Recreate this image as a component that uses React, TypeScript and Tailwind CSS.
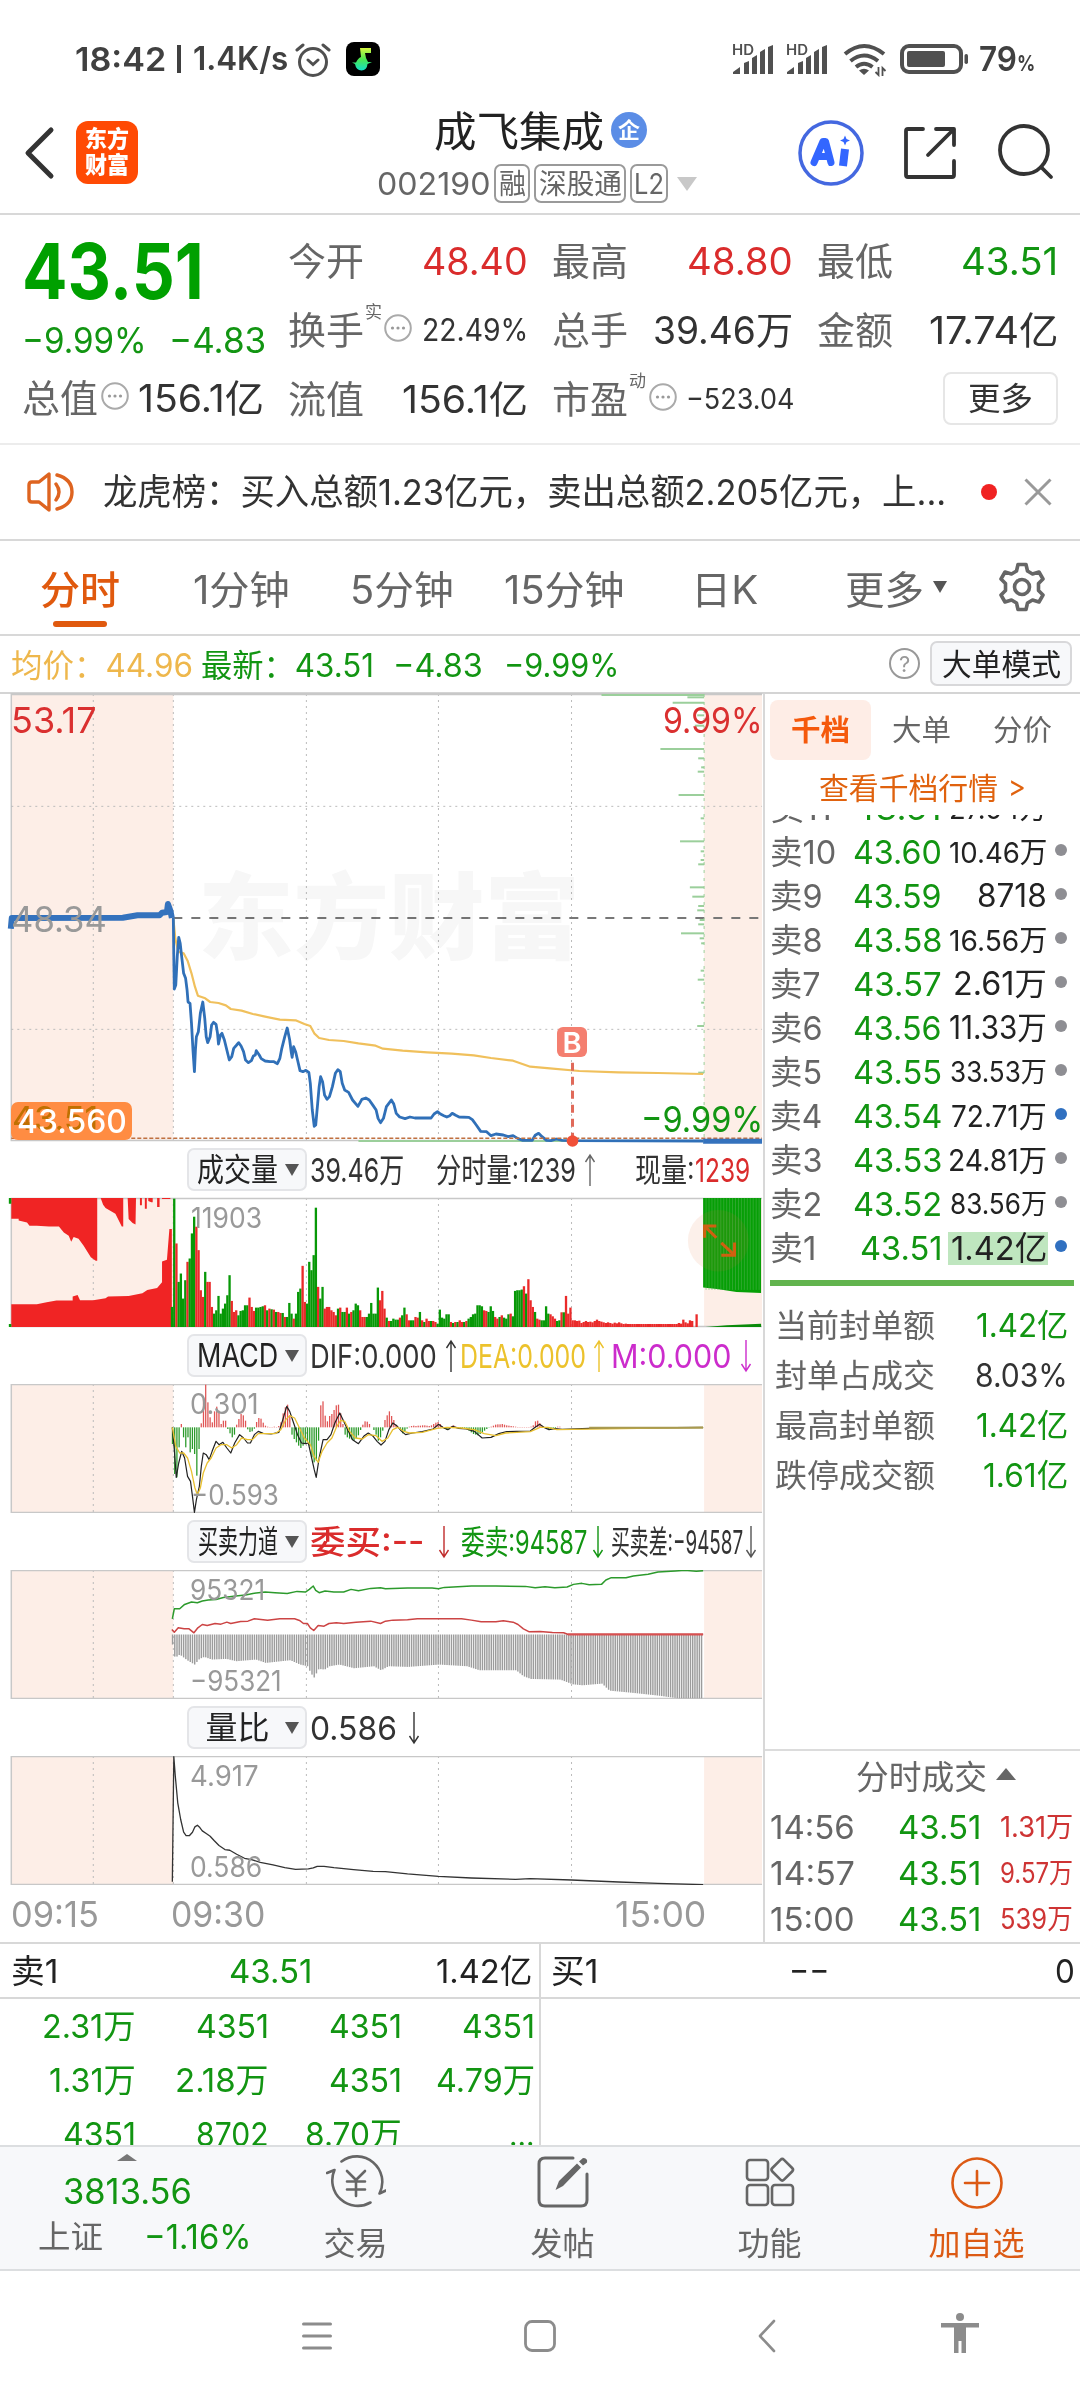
import { useLayoutEffect, useRef, useState } from "react";
import type { ReactNode } from "react";
import clsx from "clsx";

// Text that is squeezed or widened to the width of its box.
function Fit({ className, children }: { className: string; children: ReactNode }) {
  const box = useRef<HTMLSpanElement>(null);
  const text = useRef<HTMLSpanElement>(null);
  const [scale, setScale] = useState(1);

  useLayoutEffect(() => {
    if (!box.current || !text.current || !text.current.offsetWidth) return;
    setScale(box.current.clientWidth / text.current.offsetWidth);
  }, [children]);

  return (
    <span ref={box} className={clsx("block shrink-0 whitespace-pre", className)}>
      <span ref={text} className="inline-block origin-left" style={{ transform: `scaleX(${scale})` }}>
        {children}
      </span>
    </span>
  );
}

function Signal() {
  return (
    <svg viewBox="0 0 42 32" className="h-8 w-[42px] overflow-visible" fill="#505050">
      <text x="0" y="12" fontSize="14" fontWeight="600" textLength="22" lengthAdjust="spacingAndGlyphs">
        HD
      </text>
      <path d="M1 31V29L8 24V31ZM12 31V20L17 18V31ZM20 31V15L25 12V31ZM28 31V9L33 6V31ZM36 31V4L41 2V31Z" />
    </svg>
  );
}

function StatusBar() {
  return (
    <div className="flex h-[92px] shrink-0 items-center pt-[26px] text-[#404040]">
      <Fit className="ml-[75px] w-[91px] text-[33px] font-semibold">18:42</Fit>
      <span className="ml-[11px] h-7 w-[4px] bg-[#404040]" />
      <Fit className="ml-3 w-[95px] text-[32px] font-semibold">1.4K/s</Fit>
      <svg viewBox="0 0 36 36" className="ml-[7px] mt-[2px] h-9 w-9" fill="none" stroke="#505050" strokeWidth="3" strokeLinecap="round">
        <circle cx="18" cy="20" r="13.5" />
        <path d="M2 8L8 3M34 8L28 3M13 18L18 22.500L23 18" />
      </svg>
      <svg viewBox="0 0 34 34" className="ml-[15px] h-[34px] w-[34px]">
        <defs>
          <linearGradient id="note" x1="0" y1="0" x2="0" y2="1">
            <stop offset="0" stopColor="#d8f640" />
            <stop offset=".5" stopColor="#4be850" />
            <stop offset="1" stopColor="#12e0c8" />
          </linearGradient>
        </defs>
        <rect width="34" height="34" rx="8" />
        <path fill="url(#note)" d="M14 6H25V11H19L20 16L22 20H26L21.500 22Q21 28 15.500 28.500Q10 28 9 22L6 20.500H10Q12 16 15 15Z" />
      </svg>
      <div className="ml-[352px] flex items-center">
        <Signal />
        <span className="w-3" />
        <Signal />
        <svg viewBox="0 0 44 34" className="ml-[15px] mt-[2px] h-[34px] w-11" fill="none" stroke="#505050" strokeWidth="4">
          <path d="M2 11Q21 -5 41 11M7.500 18Q21 7 35 18M13 24Q21 17.500 29.500 24" />
          <path d="M16 27.500Q21 24 26 27.500L21 32Z" fill="#505050" stroke="none" />
          <path d="M35.500 24V32L32.500 29M39.500 33V25L42.500 28" strokeWidth="1.800" />
        </svg>
        <svg viewBox="0 0 70 32" className="ml-[13px] h-8 w-[70px]" fill="#505050">
          <rect x="2" y="3" width="59" height="26" rx="7" fill="none" stroke="#505050" strokeWidth="4" />
          <rect x="7" y="8" width="38" height="16" rx="2" />
          <rect x="64.500" y="11" width="3.500" height="10" rx="1.700" />
        </svg>
        <Fit className="ml-[9px] w-[38px] text-[34px] font-semibold">79</Fit>
        <Fit className="mt-2 w-[18px] text-[22px] font-bold">%</Fit>
      </div>
    </div>
  );
}

function Tag({ className, children }: { className: string; children: ReactNode }) {
  return (
    <span className={clsx("flex h-[39px] items-center justify-center rounded-[7px] border-2 border-[#9a9a9a]", className)}>
      {children}
    </span>
  );
}

function Header() {
  return (
    <header className="flex h-[123px] shrink-0 items-start border-b-2 border-[#d8d8d8]">
      <svg viewBox="0 0 32 56" className="ml-[23px] mt-[33px] h-14 w-8" fill="none" stroke="#333" strokeWidth="5" strokeLinecap="round" strokeLinejoin="round">
        <path d="M28 5L5 28L28 51" />
      </svg>
      <div className="ml-[21px] mt-[29px] flex h-[63px] w-[62px] flex-col items-center justify-center gap-[3px] rounded-[12px] bg-[#ff4a04] font-black text-white">
        <Fit className="w-[44px] text-[23px]">东方</Fit>
        <Fit className="w-[44px] text-[23px]">财富</Fit>
      </div>
      <div className="ml-[238px] flex w-[324px] flex-col">
        <div className="mt-[19px] flex h-[42px] items-center pl-[58px]">
          <Fit className="w-[170px] text-[42px] text-[#222]">成飞集成</Fit>
          <span className="-mt-1 ml-[7px] flex h-[36px] w-[36px] items-center justify-center rounded-full bg-[#5b8de6] text-[22px] font-bold text-white">
            企
          </span>
        </div>
        <div className="mt-[11px] flex h-[39px] items-center text-[28px] text-[#666]">
          <Fit className="ml-[1px] w-[113px] text-[31px]">002190</Fit>
          <Tag className="ml-[4px] w-[36px]">
            <Fit className="w-[27px]">融</Fit>
          </Tag>
          <Tag className="ml-[4px] w-[92px]">
            <Fit className="w-[83px]">深股通</Fit>
          </Tag>
          <Tag className="ml-[4px] w-[38px]">
            <Fit className="w-[30px]">L2</Fit>
          </Tag>
          <svg viewBox="0 0 20 14" className="ml-[9px] h-[14px] w-5" fill="#c8c8c8">
            <path d="M0 0H20L10 14Z" />
          </svg>
        </div>
      </div>
      <svg viewBox="0 0 66 66" className="ml-[98px] mt-[28px] h-[66px] w-[66px]">
        <circle cx="33" cy="33" r="31" fill="none" stroke="#4468e0" strokeWidth="3.500" />
        <g fill="none" stroke="#3366ff" strokeWidth="7" strokeLinejoin="round" strokeLinecap="round">
          <path d="M16 42.500L25 21.500H27.500L33 42.500M22 36.500H31" />
          <path d="M47 29L45 46" strokeLinecap="butt" strokeWidth="8" />
        </g>
        <path d="M47 15.500L48.500 19L52 20.500L48.500 22L47 25.500L45.500 22L42 20.500L45.500 19Z" fill="#3366ff" />
      </svg>
      <svg viewBox="0 0 56 56" className="ml-[38px] mt-[33px] h-14 w-14" fill="none" stroke="#333" strokeWidth="3.800" strokeLinecap="round" strokeLinejoin="round">
        <path d="M21 4H6Q4 4 4 6V50Q4 52 6 52H50Q52 52 52 50V36M34 4H52V20M51 5L26 30" />
      </svg>
      <svg viewBox="0 0 58 58" className="ml-[39px] mt-[31px] h-[58px] w-[58px]" fill="none" stroke="#333" strokeWidth="3.800" strokeLinecap="round">
        <circle cx="27" cy="27" r="24" />
        <path d="M44 44L54 54" />
      </svg>
    </header>
  );
}

function MoreDots({ className }: { className?: string }) {
  return (
    <svg viewBox="0 0 28 28" className={clsx("h-7 w-7 shrink-0", className)} fill="#999">
      <circle cx="14" cy="14" r="12.800" fill="none" stroke="#aaa" strokeWidth="2" />
      <circle cx="8.500" cy="14" r="1.600" />
      <circle cx="14" cy="14" r="1.600" />
      <circle cx="19.500" cy="14" r="1.600" />
    </svg>
  );
}

function QuoteSummary() {
  return (
    <section className="flex h-[230px] shrink-0 border-b-2 border-[#ececec] pt-[11px] text-[38px] text-[#333]">
      <div className="w-[288px] pl-[22px]">
        <Fit className="mt-[7px] w-[182px] text-[77px] font-bold text-[#00a000]">43.51</Fit>
        <div className="mt-[12px] flex h-[36px] items-center gap-[22px] text-[35px] text-[#129512]">
          <Fit className="w-[125px]">−9.99%</Fit>
          <Fit className="w-[97px]">−4.83</Fit>
        </div>
        <div className="mt-[5px] flex h-[69px] items-center">
          <Fit className="w-[76px] text-[#666]">总值</Fit>
          <MoreDots className="-mt-1 ml-[3px]" />
          <Fit className="ml-[9px] w-[126px]">156.1亿</Fit>
        </div>
      </div>
      <div className="w-[264px]">
        <div className="flex h-[69px] items-center justify-between pr-[24px]">
          <Fit className="w-[76px] text-[#666]">今开</Fit>
          <Fit className="w-[106px] text-[#da2c2c]">48.40</Fit>
        </div>
        <div className="flex h-[69px] items-center">
          <Fit className="w-[76px] text-[#666]">换手</Fit>
          <Fit className="-mt-[34px] ml-[1px] w-[17px] text-[17px] text-[#666]">实</Fit>
          <MoreDots className="-mt-1 ml-[2px]" />
          <Fit className="ml-[10px] w-[106px] text-[31px]">22.49%</Fit>
        </div>
        <div className="flex h-[69px] items-center justify-between pr-[24px]">
          <Fit className="w-[76px] text-[#666]">流值</Fit>
          <Fit className="w-[126px]">156.1亿</Fit>
        </div>
      </div>
      <div className="w-[265px]">
        <div className="flex h-[69px] items-center justify-between pr-[24px]">
          <Fit className="w-[76px] text-[#666]">最高</Fit>
          <Fit className="w-[106px] text-[#da2c2c]">48.80</Fit>
        </div>
        <div className="flex h-[69px] items-center justify-between pr-[24px]">
          <Fit className="w-[76px] text-[#666]">总手</Fit>
          <Fit className="w-[140px]">39.46万</Fit>
        </div>
        <div className="flex h-[69px] items-center">
          <Fit className="w-[76px] text-[#666]">市盈</Fit>
          <Fit className="-mt-[34px] ml-[1px] w-[17px] text-[17px] text-[#666]">动</Fit>
          <MoreDots className="-mt-1 ml-[3px]" />
          <Fit className="ml-[9px] w-[108px] text-[28px]">−523.04</Fit>
        </div>
      </div>
      <div className="w-[241px]">
        <div className="flex h-[69px] items-center justify-between">
          <Fit className="w-[76px] text-[#666]">最低</Fit>
          <Fit className="w-[97px] text-[#129512]">43.51</Fit>
        </div>
        <div className="flex h-[69px] items-center justify-between">
          <Fit className="w-[76px] text-[#666]">金额</Fit>
          <Fit className="w-[129px]">17.74亿</Fit>
        </div>
        <div className="ml-[126px] mt-[8px] flex h-[53px] w-[115px] items-center justify-center rounded-[8px] border-2 border-[#e6e6e6]">
          <Fit className="w-[65px] text-[32px]">更多</Fit>
        </div>
      </div>
    </section>
  );
}

function Notice() {
  return (
    <section className="flex h-[96px] shrink-0 items-center border-b-2 border-[#d8d8d8]">
      <svg viewBox="0 0 48 42" className="ml-[26px] h-[42px] w-12" fill="none" stroke="#de6420" strokeWidth="3.400" strokeLinejoin="round" strokeLinecap="round">
        <path d="M23 3V39L13 31H6Q3 31 3 28V14Q3 11 6 11H13Z" />
        <path d="M30 13Q36 21 30 29M31 4Q46 8 46 21Q46 34 31 38" />
      </svg>
      <Fit className="ml-[29px] w-[843px] text-[36px] text-[#333]">龙虎榜：买入总额1.23亿元，卖出总额2.205亿元，上...</Fit>
      <span className="ml-[35px] h-4 w-4 rounded-full bg-[#f02222]" />
      <svg viewBox="0 0 28 28" className="ml-[27px] h-7 w-7" stroke="#999" strokeWidth="3">
        <path d="M1.500 1.500L26.500 26.500M26.500 1.500L1.500 26.500" />
      </svg>
    </section>
  );
}

function PeriodTabs() {
  return (
    <nav className="flex h-[95px] shrink-0 items-center border-b-2 border-[#d8d8d8] pt-[3px] text-[39px] text-[#666]">
      <div className="relative ml-[40px] text-[#e0590e]">
        <Fit className="w-[80px] font-medium">分时</Fit>
        <span className="absolute -bottom-[18px] left-[13px] h-[6px] w-[54px] rounded-[3px] bg-[#e0590e]" />
      </div>
      <Fit className="ml-[73px] w-[97px]">1分钟</Fit>
      <Fit className="ml-[60px] w-[104px]">5分钟</Fit>
      <Fit className="ml-[50px] w-[121px]">15分钟</Fit>
      <Fit className="ml-[66px] w-[67px]">日K</Fit>
      <Fit className="ml-[87px] w-[79px]">更多</Fit>
      <svg viewBox="0 0 14 12" className="-mt-1 ml-[9px] h-3 w-[14px]" fill="#555">
        <path d="M0 0H14L7 12Z" />
      </svg>
      <svg viewBox="0 0 48 50" className="-mt-[4px] ml-[51px] h-[50px] w-12" fill="none" stroke="#666" strokeWidth="3.600" strokeLinejoin="round">
        <path d="M20 2.500H28L29.500 9L34.500 12L41 10L45 17L40.500 21.500V28.500L45 33L41 40L34.500 38L29.500 41L28 47.500H20L18.500 41L13.500 38L7 40L3 33L7.500 28.500V21.500L3 17L7 10L13.500 12L18.500 9Z" />
        <circle cx="24" cy="25" r="7.500" />
      </svg>
    </nav>
  );
}

function PriceLine() {
  return (
    <div className="flex h-[58px] shrink-0 items-center border-b-2 border-[#d4d4d4] pt-[3px] text-[32px] text-[#129512]">
      <Fit className="ml-[11px] w-[182px] text-[#eeb74c]">均价：44.96</Fit>
      <Fit className="ml-[8px] w-[173px]">最新：43.51</Fit>
      <Fit className="ml-[19px] w-[90px]">−4.83</Fit>
      <Fit className="ml-[21px] w-[115px]">−9.99%</Fit>
      <span className="-mt-1 ml-[270px] flex h-[31px] w-[31px] items-center justify-center rounded-full border-2 border-[#999] text-[22px] text-[#999]">
        ?
      </span>
      <span className="-mt-1 ml-[10px] flex h-[45px] w-[142px] items-center justify-center rounded-[7px] border-2 border-[#d8d8da] bg-[#f7f8fa] text-[30px] text-[#222]">
        <Fit className="w-[119px]">大单模式</Fit>
      </span>
    </div>
  );
}

// Session shading and time grid shared by all the charts. The charts use one
// horizontal scale of 1556 units; each has its own vertical range.
function Frame({ top, height }: { top: number; height: number }) {
  return (
    <g>
      <rect x="23" y={top} width="330" height={height} fill="#fdeee7" />
      <rect x="1434" y={top} width="118" height={height} fill="#fdeee7" />
      <g stroke="#bbb" strokeDasharray="2 4">
        {[190, 353, 624, 893, 1164].map((x) => (
          <line key={x} x1={x} x2={x} y1={top} y2={top + height} vectorEffect="non-scaling-stroke" />
        ))}
      </g>
      <path d={`M1552 ${top + 1.5}H23V${top + height - 1.5}H1552`} fill="none" stroke="#c8c8c8" strokeWidth="1.500" vectorEffect="non-scaling-stroke" />
    </g>
  );
}

function Line({ points, color, width = 1.5 }: { points: string; color: string; width?: number }) {
  return <polyline points={points} fill="none" stroke={color} strokeWidth={width} strokeLinejoin="round" vectorEffect="non-scaling-stroke" />;
}

const bookDepth = [
  [15, 1225], [22, 1400], [38, 1370], [60, 1424], [76, 1420], [107, 1415], [177, 1345], [205, 1422], [232, 1428], [245, 1421],
  [315, 1382], [385, 1427], [454, 1385], [484, 1427], [510, 1427], [523, 1422], [592, 1405], [620, 1410], [648, 1422], [661, 1420],
  [690, 1425], [703, 1422], [730, 1387], [745, 1425], [760, 1428], [842, 1427], [869, 1421], [938, 1428], [1008, 1420], [1148, 1422],
];

const pricePoints =
  "353,684 354,800 355,897 358,885 361,800 364,742 367,760 370,800 374,850 378,865 381,900 383,936 387,940 390,1000 393,1080 396,1145 398,1080 400,1040 404,1025 408,970 413,936 417,985 420,1040 423,1058 428,1040 431,1005 435,997 440,1003 443,1030 445,1062 449,1035 452,1030 457,1050 462,1080 467,1110 472,1100 476,1075 482,1065 486,1058 491,1068 496,1085 500,1110 506,1118 512,1112 516,1098 520,1095 522,1082 528,1095 532,1106 540,1113 550,1115 558,1115 565,1121 570,1105 574,1075 580,1040 585,1014 590,1050 593,1085 595,1102 598,1070 602,1085 606,1110 611,1142 617,1145 623,1141 629,1147 632,1180 636,1260 640,1309 643,1305 647,1240 650,1190 653,1160 657,1175 661,1215 666,1228 671,1220 677,1190 683,1150 688,1139 693,1145 697,1180 702,1200 710,1207 718,1230 729,1249 737,1228 745,1224 752,1230 760,1247 766,1260 770,1285 775,1298 781,1285 787,1250 792,1240 797,1230 802,1242 807,1270 814,1281 825,1286 835,1281 845,1284 860,1284 878,1284 884,1272 891,1265 897,1272 904,1277 910,1281 916,1277 921,1270 928,1276 935,1281 955,1282 962,1289 970,1305 979,1324 991,1325 1000,1337 1010,1332 1025,1335 1035,1340 1045,1337 1055,1346 1065,1351 1084,1351 1090,1336 1097,1330 1104,1340 1113,1351 1122,1352 1133,1347 1145,1351 1165,1352 1432,1353";

const averagePoints =
  "353,684 357,745 363,785 374,790 382,812 390,850 397,890 403,917 418,925 428,936 445,939 460,946 470,957 492,962 515,972 540,980 570,989 602,991 620,1002 632,1008 640,1030 650,1044 670,1050 700,1053 730,1060 765,1067 780,1076 820,1082 870,1087 920,1091 965,1096 1000,1104 1045,1112 1080,1130 1120,1135 1180,1143 1260,1147 1340,1149 1432,1152";

function MainChart() {
  return (
    <div className="relative h-[447px]">
      <span className="absolute left-[198px] top-[177px]">
        <Fit className="w-[382px] text-[94px] font-black text-[#f7f7f7]">东方财富</Fit>
      </span>
      <svg viewBox="0 12 1556 1341" preserveAspectRatio="none" className="absolute inset-0 h-full w-[764px] overflow-visible mix-blend-multiply">
        <Frame top={12} height={1341} />
        <g stroke="#bbb" strokeDasharray="2 4">
          <line x1="23" x2="1552" y1="349" y2="349" vectorEffect="non-scaling-stroke" />
          <line x1="23" x2="1552" y1="1018" y2="1018" vectorEffect="non-scaling-stroke" />
        </g>
        <line x1="353" x2="1552" y1="684" y2="684" stroke="#777" strokeWidth="2" strokeDasharray="9 9" vectorEffect="non-scaling-stroke" />
        <g stroke="#9bcf9b" strokeWidth="2">
          {bookDepth.map(([y, x]) => (
            <line key={y} x1={x} x2="1434" y1={y} y2={y} vectorEffect="non-scaling-stroke" />
          ))}
          <line x1="1434" x2="1434" y1="12" y2="1353" strokeDasharray="3 5" strokeWidth="1" vectorEffect="non-scaling-stroke" />
          <line x1="730" x2="1434" y1="1353" y2="1353" vectorEffect="non-scaling-stroke" />
        </g>
        <Line points={averagePoints} color="#f0c05c" width={2.2} />
        <Line points={pricePoints} color="#3070b8" width={2.8} />
        <Line points="22,716 24,684 250,683 280,676 325,676 330,668 340,666 342,642 347,662 350,684" color="#3472bd" width={6} />
        <line x1="23" x2="1552" y1="1345" y2="1345" stroke="#c07040" strokeWidth="1.500" strokeDasharray="4 2" vectorEffect="non-scaling-stroke" />
        <line x1="1432" x2="1552" y1="1354" y2="1354" stroke="#3472bd" strokeWidth="5" vectorEffect="non-scaling-stroke" />
        <line x1="1166" x2="1166" y1="1118" y2="1345" stroke="#e06a5a" strokeWidth="3" strokeDasharray="8 6" vectorEffect="non-scaling-stroke" />
        <ellipse cx="1166" cy="1353" rx="12" ry="17" fill="#f05038" />
      </svg>
      <div className="absolute left-[11px] top-[8px] text-[36px] text-[#da3030]">
        <Fit className="w-[86px]">53.17</Fit>
      </div>
      <div className="absolute right-0 top-[8px] text-[36px] text-[#da3030]">
        <Fit className="w-[100px]">9.99%</Fit>
      </div>
      <div className="absolute left-[11px] top-[208px] text-[35px] text-[#999]">
        <Fit className="w-[96px]">48.34</Fit>
      </div>
      <div className="absolute right-0 top-[407px] text-[36px] text-[#129512]">
        <Fit className="w-[122px]">−9.99%</Fit>
      </div>
      <span className="absolute left-[557px] top-[333px] flex h-[30px] w-[30px] items-center justify-center rounded-[6px] bg-[#f47f70] text-[29px] font-semibold text-white">
        B
      </span>
      <div className="absolute left-[11px] top-[408px] h-[38px] w-[121px] rounded-[7px] bg-[#ff8c42] text-[33px] text-white">
        <span className="absolute left-[1px] top-0 text-[#c07000]">
          <Fit className="w-[86px]">43.51</Fit>
        </span>
        <span className="absolute left-[6px] top-[3px]">
          <Fit className="w-[110px] font-medium">43.560</Fit>
        </span>
      </div>
    </div>
  );
}

function IndicatorHeader({ name, wide, children }: { name: string; wide: string; children: ReactNode }) {
  return (
    <div className="flex h-[57px] items-center pt-px text-[33px] text-[#333]">
      <span className="-mt-px ml-[187px] flex h-[43px] w-[120px] shrink-0 items-center justify-between rounded-[7px] border-2 border-[#e4e5e8] bg-[#f7f8fa] pl-[7px] pr-[6px] text-[32px] text-[#222]">
        <span className="flex w-[83px] justify-center">
          <Fit className={wide}>{name}</Fit>
        </span>
        <svg viewBox="0 0 14 12" className="h-3 w-[14px]" fill="#555">
          <path d="M0 0H14L7 12Z" />
        </svg>
      </span>
      {children}
    </div>
  );
}

function Arrow({ down, className }: { down?: boolean; className: string }) {
  return (
    <svg viewBox="0 0 12 34" className={clsx("h-[34px] w-3 shrink-0", className)} fill="none" stroke="currentColor" strokeWidth="1.400">
      <path d={down ? "M6 1V32M1.500 25L6 32L10.500 25" : "M6 33V2M1.500 9L6 2L10.500 9"} />
    </svg>
  );
}

// Bar height and direction for each minute from 09:30.
const volumeBars =
  "60g 384g 250r 135g 160g 85g 140g 195r 205g 280g 330g 300r 230r 110r 90r 165g 135r 135r 60r 40g 50g 93g 40g 55g 70g 95g 155g 78r 45r 50r 35g 48g 50g 65g 65g 88r 60r 48r 58g 58g 60g 62g 65r 50g 55r 53g 52r 45g 45r 42r 42g 30r 30g 72g 40g 25r 40g 105g 115g 183r 75r 70g 195g 170g 215g 357g 120r 85g 120g 55r 60r 60r 50r 45r 35r 55g 58r 45g 45g 58r 40g 45r 50g 70g 65g 50r 30r 30r 30g 40g 72g 40g 40g 118g 80r 108r 55r 28g 18r 18g 25g 22g 22g 28r 35g 58g 38r 20r 20g 20g 30r 28r 45g 20r 15g 25r 18r 18g 18r 15r 10g 52g 28g 25g 38g 38g 15r 12g 15r 15g 20r 15r 15g 18r 25g 30g 38g 40g 65g 65g 62g 50r 48r 45g 62g 48g 30r 25r 30g 35r 28g 25g 38g 40r 32g 108g 110g 110g 112g 122r 100g 143r 80r 60r 45g 25r 22r 20g 20g 62g 40g 38r 32r 25r 18g 20g 44r 44g 93r 40r 58r 20r 20r 18r 19r 12r 15r 18r 15r 16r 14r 18r 22r 18r 16r 14r 12r 14r 12r 10r 13r 11r 14r 11r 9r 10r 9r 9r 9r 9r 9r 9r 9r 9r 9r 9r 9r 9r 9r 9r 9r 9r 9r 9r 9r 9r 9r 9r 9r 12r 10r 22r 14r 11r 20r 18r 0r 38r".split(" ");

function VolumeChart() {
  return (
    <div className="relative h-[129px]">
      <svg viewBox="0 205 1556 386" preserveAspectRatio="none" className="absolute inset-0 h-full w-[764px] overflow-visible">
        <Frame top={205} height={386} />
        <g fill="#f02424">
          <path d="M23 205V267H38V272L55 278L60 288H75L100 290H120L130 308L140 318L145 336L150 322L160 327L170 347L185 382L195 393H198V205Z" />
          <path d="M205 205L210 225L215 235L235 252L248 290H251V270V205ZM260 205L262 268L270 280L276 284L277 205ZM285 205V227H289V205ZM295 205V237H299V205ZM302 205V214L308 218H311V205ZM320 205V232H325V205ZM330 205V208H347V205Z" />
          <path d="M23 591V523H75L95 517L115 512H148V500L158 495L163 511H190L215 505L220 500L262 498L290 490L300 480L320 474L330 457V395L340 390L345 298H350V591Z" />
        </g>
        <path d="M18 205V222H23V205ZM18 582H23V591H18Z" fill="#0a9a0a" />
        {volumeBars.map((bar, i) => {
          const h = parseInt(bar, 10);
          return <rect key={i} x={348 + i * 4.508} y={591 - h} width="4.700" height={h} fill={bar.endsWith("r") ? "#ea2a2a" : "#079807"} />;
        })}
        <path d="M1432 205V473L1460 477L1480 482L1500 486L1550 489V205Z" fill="#069f06" />
        <path d="M1437 591L1480 586L1550 581V591Z" fill="#0a8a0a" />
        <g stroke="#55b455" strokeOpacity=".5">
          {Array.from({ length: 19 }, (_, i) => (
            <line key={i} x1={1438 + i * 6} x2={1438 + i * 6} y1="205" y2="480" vectorEffect="non-scaling-stroke" />
          ))}
        </g>
        <ellipse cx="1463" cy="333" rx="62" ry="92" fill="#e07030" fillOpacity=".1" />
        <path d="M1459 289H1435V324M1435 289L1459 324M1496 338V376H1469M1496 376L1469 339" fill="none" stroke="#d06010" strokeWidth="3" vectorEffect="non-scaling-stroke" />
      </svg>
      <div className="absolute left-[191px] top-[6px] text-[28px] text-[#999]">
        <Fit className="w-[71px]">11903</Fit>
      </div>
    </div>
  );
}

const macdBars = [
  -50, -140, -150, -60, 10, -30, -60, -30, -75, -65, -80, -145, -65, 12, 85, 128, 75, 30, 15, 48, 62, 50, 10, 20, 20, -5, -18, -30, -22, 8,
  25, 40, 36, 20, -6, -14, -12, -4, 16, 28, 26, 14, 5, 2, 1, 1, 2, 1, 4, 15, 42, 60, 68, 35, -22, -35, -45, -55, -62, -55,
  -48, -42, -55, -90, -105, -100, -40, 66, 78, 35, 18, 34, 40, 52, 66, 68, 42, 10, -22, -30, -34, -36, -40, -32, -24, -8, 8, 18, 17, 10,
  0, -8, -22, -40, -30, -10, 22, 36, 48, 34, 22, 8, 0, -8, -18, -12, -4, 2, 4, 5, 4, 5, 5, 6, 6, 5, 4, 6, 10, 14,
  16, 10, 2, -5, -8, -6, 3, 6, 2, -2, -2, -3, -4, -6, -10, -15, -20, -22, -24, -20, -15, -10, -5, -1, 2, 5, 8, 9, 9, 10,
  8, 6, 5, 4, 3, 2, 1, 1, 1, 1, 1, 1, 2, 6, 18, 20, 12, 4, 1, -4, -6, -5, -3, -2, 2, 2,
];

function MacdChart() {
  return (
    <div className="relative h-[129px]">
      <svg viewBox="0 763 1556 387" preserveAspectRatio="none" className="absolute inset-0 h-full w-[764px]">
        <Frame top={763} height={387} />
        {macdBars.map((v, i) => (
          <rect key={i} x={350 + i * 4.508} y={v > 0 ? 893 - v : 893} width="2.600" height={Math.abs(v)} fill={v > 0 ? "#e05555" : "#2a9a2a"} />
        ))}
        <Line points="351,893 355,960 359,1043 364,1000 370,965 376,985 382,1040 388,1055 392,1100 396,1148 400,1110 406,1070 410,1010 414,970 420,975 426,990 432,965 440,935 446,945 454,938 462,955 470,970 478,940 488,915 496,925 504,940 510,940 518,915 526,905 536,911 552,913 568,908 576,870 584,830 590,845 598,880 606,915 614,940 622,942 628,940 634,980 640,1020 644,1043 650,985 658,930 666,930 674,915 682,880 692,850 700,875 708,900 718,930 730,942 742,918 750,910 760,920 768,935 776,946 784,935 792,900 800,880 808,888 818,905 826,915 840,910 860,906 882,898 893,884 902,893 912,900 922,890 934,896 950,898 966,905 982,925 1000,923 1016,912 1032,906 1052,905 1080,904 1090,893 1099,884 1108,893 1118,900 1130,897 1145,899 1200,896 1432,893" color="#222" width={1.2} />
        <Line points="351,893 358,950 366,970 374,970 382,985 390,1025 397,1075 402,1095 408,1075 414,1030 422,1000 430,985 440,955 450,945 462,945 472,955 482,945 492,925 504,930 514,930 526,912 540,912 560,912 572,900 582,870 590,858 600,865 610,895 620,925 632,945 640,980 648,998 656,965 666,940 676,925 686,890 694,872 702,875 712,905 724,925 738,928 750,915 766,918 778,935 790,925 800,900 810,893 822,905 834,910 860,908 890,896 910,893 940,895 966,900 986,912 1010,918 1030,910 1080,906 1100,893 1116,893 1134,900 1432,893" color="#e8c030" width={1.3} />
        <line x1="1200" x2="1432" y1="894" y2="894" stroke="#a89a50" strokeWidth="2" vectorEffect="non-scaling-stroke" />
      </svg>
      <div className="absolute left-[190px] top-[6px] text-[28px] text-[#999]">
        <Fit className="w-[69px]">0.301</Fit>
      </div>
      <div className="absolute left-[191px] top-[97px] text-[28px] text-[#999]">
        <Fit className="w-[88px]">−0.593</Fit>
      </div>
    </div>
  );
}

// [x, y] outline of the buy/sell difference area.
const forceArea = [
  [350, 405], [355, 445], [365, 435], [380, 452], [395, 465], [405, 448], [415, 442], [430, 450], [460, 448], [480, 455], [520, 450], [540, 460], [590, 452], [610, 465], [625, 470], [630, 485], [638, 505],
  [648, 478], [660, 480], [670, 470], [690, 465], [720, 476], [760, 470], [775, 482], [790, 470], [830, 472], [893, 465], [950, 470], [975, 482], [1050, 482], [1065, 500], [1080, 508], [1140, 510], [1165, 524],
  [1185, 527], [1225, 522], [1240, 543], [1290, 550], [1340, 558], [1380, 566], [1434, 566],
];

function forceAt(x: number) {
  const next = Math.max(1, forceArea.findIndex(([px]) => px >= x));
  const [x0, y0] = forceArea[next - 1];
  const [x1, y1] = forceArea[next];
  return y0 + ((y1 - y0) * (x - x0)) / (x1 - x0);
}

function ForceChart() {
  return (
    <div className="relative h-[129px]">
      <svg viewBox="0 182 1556 386" preserveAspectRatio="none" className="absolute inset-0 h-full w-[764px]">
        <Frame top={182} height={386} />
        {Array.from({ length: 240 }, (_, i) => {
          const x = 350 + i * 4.508;
          return <rect key={i} x={x} y="375" width="2.900" height={forceAt(x) - 375} fill="#9c9c9c" />;
        })}
        <Line points="351,328 355,298 366,298 376,285 390,278 402,280 412,275 424,272 440,270 455,264 480,260 500,257 515,252 540,248 560,250 585,252 605,246 622,248 630,240 638,230 643,243 650,250 662,245 680,248 700,248 715,240 730,244 755,237 775,235 785,238 830,236 880,236 893,238 905,234 960,230 1010,230 1070,231 1090,235 1110,232 1130,235 1155,233 1168,225 1185,222 1200,226 1225,225 1234,212 1245,205 1275,205 1290,200 1320,195 1340,188 1375,185 1395,183 1418,186 1432,184" color="#2c9a2c" width={1.5} />
        <Line points="350,360 355,368 363,355 375,358 385,358 395,370 403,355 412,345 422,348 438,342 450,344 462,338 470,342 490,336 505,335 518,328 545,332 570,328 600,328 610,333 618,342 626,342 632,355 639,363 648,348 660,350 670,342 685,340 700,342 725,338 755,335 775,342 785,335 800,332 830,331 850,328 940,328 960,332 980,337 1010,337 1025,334 1045,338 1055,345 1066,358 1078,367 1100,366 1125,369 1148,370 1156,374 1432,374" color="#c44" width={1.5} />
        <line x1="1156" x2="1432" y1="375" y2="375" stroke="#d85050" strokeWidth="2" vectorEffect="non-scaling-stroke" />
      </svg>
      <div className="absolute left-[190px] top-[6px] text-[28px] text-[#999]">
        <Fit className="w-[75px]">95321</Fit>
      </div>
      <div className="absolute left-[190px] top-[97px] text-[28px] text-[#999]">
        <Fit className="w-[92px]">−95321</Fit>
      </div>
    </div>
  );
}

function RatioChart() {
  return (
    <div className="relative h-[129px]">
      <svg viewBox="0 740 1556 386" preserveAspectRatio="none" className="absolute inset-0 h-full w-[764px]">
        <Frame top={740} height={386} />
        <Line points="351,1116 354,742 357,800 362,880 368,930 374,968 379,978 386,978 392,968 397,952 402,947 407,954 412,964 420,972 428,980 436,993 446,1008 458,1020 468,1022 482,1034 498,1046 512,1050 530,1058 556,1066 580,1074 602,1079 628,1078 638,1075 646,1070 660,1070 680,1074 720,1080 760,1085 785,1086 830,1093 893,1100 960,1105 1050,1109 1080,1107 1164,1111 1260,1117 1340,1121 1432,1125" color="#333" width={1.3} />
      </svg>
      <div className="absolute left-[190px] top-[6px] text-[28px] text-[#999]">
        <Fit className="w-[69px]">4.917</Fit>
      </div>
      <div className="absolute left-[190px] top-[97px] text-[28px] text-[#999]">
        <Fit className="w-[72px]">0.586</Fit>
      </div>
    </div>
  );
}

function ChartColumn() {
  return (
    <div className="w-[763px] shrink-0">
      <MainChart />
      <IndicatorHeader name="成交量" wide="w-[81px]">
        <Fit className="ml-[3px] w-[94px]">39.46万</Fit>
        <Fit className="ml-[32px] w-[140px]">分时量:1239</Fit>
        <Arrow className="ml-[8px] text-[#666]" />
        <Fit className="ml-[39px] w-[60px]">现量:</Fit>
        <Fit className="w-[55px] text-[#da2c2c]">1239</Fit>
      </IndicatorHeader>
      <VolumeChart />
      <IndicatorHeader name="MACD" wide="w-[81px]">
        <Fit className="ml-[3px] w-[127px]">DIF:0.000</Fit>
        <Arrow className="ml-[8px] text-[#333]" />
        <Fit className="ml-[3px] w-[126px] text-[#ecc22c]">DEA:0.000</Fit>
        <Arrow className="ml-[7px] text-[#ecc22c]" />
        <Fit className="ml-[6px] w-[120px] text-[#cc2ccc]">M:0.000</Fit>
        <Arrow down className="ml-[9px] text-[#cc2ccc]" />
      </IndicatorHeader>
      <MacdChart />
      <IndicatorHeader name="买卖力道" wide="w-[80px]">
        <Fit className="ml-[3px] w-[115px] font-medium text-[#da2c2c]">委买:--</Fit>
        <Arrow down className="ml-[13px] text-[#c02c2c]" />
        <Fit className="ml-[11px] w-[126px] text-[#129512]">委卖:94587</Fit>
        <Arrow down className="ml-[5px] text-[#129512]" />
        <Fit className="ml-[7px] w-[132px]">买卖差:−94587</Fit>
        <Arrow down className="ml-[2px] text-[#555]" />
      </IndicatorHeader>
      <ForceChart />
      <IndicatorHeader name="量比" wide="w-[64px]">
        <Fit className="ml-[3px] w-[87px]">0.586</Fit>
        <Arrow down className="ml-[11px] text-[#333]" />
      </IndicatorHeader>
      <RatioChart />
      <div className="flex h-[57px] items-center pt-px text-[36px] text-[#999]">
        <Fit className="ml-[11px] w-[88px]">09:15</Fit>
        <Fit className="ml-[72px] w-[94px]">09:30</Fit>
        <Fit className="ml-[350px] w-[91px]">15:00</Fit>
      </div>
    </div>
  );
}

const asks = [
  { name: "卖11", price: "43.61", volume: "27.04万", nameWidth: "w-[62px]", size: "w-[98px] text-[29px]", dot: "" },
  { name: "卖10", price: "43.60", volume: "10.46万", nameWidth: "w-[66px]", size: "w-[98px] text-[29px]", dot: "bg-[#8e8e93]" },
  { name: "卖9", price: "43.59", volume: "8718", nameWidth: "w-[52px]", size: "w-[70px] text-[32px]", dot: "bg-[#8e8e93]" },
  { name: "卖8", price: "43.58", volume: "16.56万", nameWidth: "w-[52px]", size: "w-[98px] text-[29px]", dot: "bg-[#8e8e93]" },
  { name: "卖7", price: "43.57", volume: "2.61万", nameWidth: "w-[51px]", size: "w-[94px] text-[32px]", dot: "bg-[#8e8e93]" },
  { name: "卖6", price: "43.56", volume: "11.33万", nameWidth: "w-[52px]", size: "w-[98px] text-[32px]", dot: "bg-[#8e8e93]" },
  { name: "卖5", price: "43.55", volume: "33.53万", nameWidth: "w-[52px]", size: "w-[97px] text-[28px]", dot: "bg-[#8e8e93]" },
  { name: "卖4", price: "43.54", volume: "72.71万", nameWidth: "w-[52px]", size: "w-[96px] text-[30px]", dot: "bg-[#3070c0]" },
  { name: "卖3", price: "43.53", volume: "24.81万", nameWidth: "w-[52px]", size: "w-[99px] text-[30px]", dot: "bg-[#8e8e93]" },
  { name: "卖2", price: "43.52", volume: "83.56万", nameWidth: "w-[52px]", size: "w-[97px] text-[28px]", dot: "bg-[#8e8e93]" },
  { name: "卖1", price: "43.51", volume: "1.42亿", nameWidth: "w-[46px]", size: "w-[96px] text-[33px]", dot: "bg-[#3070c0]" },
];

const sealed = [
  { label: "当前封单额", value: "1.42亿", width: "w-[92px]", color: "text-[#129512]" },
  { label: "封单占成交", value: "8.03%", width: "w-[93px]", color: "text-[#333]" },
  { label: "最高封单额", value: "1.42亿", width: "w-[92px]", color: "text-[#129512]" },
  { label: "跌停成交额", value: "1.61亿", width: "w-[85px]", color: "text-[#129512]" },
];

const trades = [
  { time: "14:56", volume: "1.31万" },
  { time: "14:57", volume: "9.57万" },
  { time: "15:00", volume: "539万" },
];

function OrderBook() {
  return (
    <aside className="flex w-[317px] flex-col border-l-2 border-[#d8d8d8] text-[#666]">
      <div className="mt-[6px] flex h-[60px] shrink-0 items-center pl-[5px] text-[29px]">
        <span className="flex h-[60px] w-[101px] items-center justify-center rounded-[8px] bg-[#feede6] font-bold text-[#f5590c]">
          <Fit className="w-[59px]">千档</Fit>
        </span>
        <Fit className="ml-[21px] w-[59px]">大单</Fit>
        <Fit className="ml-[42px] w-[59px]">分价</Fit>
      </div>
      <div className="flex h-[55px] shrink-0 items-center pt-px text-[30px] text-[#e0620e]">
        <Fit className="ml-[54px] w-[179px]">查看千档行情</Fit>
        <Fit className="ml-[10px] w-[18px]">&gt;</Fit>
      </div>
      <div className="flex h-[455px] shrink-0 flex-col justify-end overflow-hidden">
        {asks.map((ask) => (
          <div key={ask.name} className="flex h-[44px] shrink-0 items-center pl-[5px] text-[33px]">
            <Fit className={ask.nameWidth}>{ask.name}</Fit>
            <div className="ml-auto">
              <Fit className={clsx("text-[#129512]", ask.name === "卖1" ? "w-[82px]" : "w-[89px]")}>{ask.price}</Fit>
            </div>
            <div className={clsx("ml-[6px] flex h-[33px] w-[100px] items-center justify-end pr-[1px] text-[#222]", ask.name === "卖1" && "bg-[#bfe6bf]")}>
              <Fit className={ask.size}>{ask.volume}</Fit>
            </div>
            <span className={clsx("-mt-1 ml-[7px] mr-[13px] h-3 w-3 rounded-full", ask.dot)} />
          </div>
        ))}
      </div>
      <div className="ml-[5px] mt-[10px] h-[6px] w-[304px] shrink-0 bg-[#62b44e]" />
      <div className="mt-[15px] flex flex-col text-[32px]">
        {sealed.map((row) => (
          <div key={row.label} className="flex h-[50px] items-center justify-between pl-[10px] pr-[12px]">
            <Fit className="w-[160px]">{row.label}</Fit>
            <Fit className={clsx(row.width, row.color)}>{row.value}</Fit>
          </div>
        ))}
      </div>
      <div className="mt-auto border-t-2 border-[#dcdcdc]">
        <div className="flex h-[53px] items-center pl-[91px] text-[33px]">
          <Fit className="w-[131px]">分时成交</Fit>
          <svg viewBox="0 0 20 12" className="-mt-[8px] ml-[9px] h-3 w-5" fill="#666">
            <path d="M0 12H20L10 0Z" />
          </svg>
        </div>
        {trades.map((trade) => (
          <div key={trade.time} className="flex h-[46px] items-center pl-[5px] text-[33px]">
            <Fit className="w-[85px]">{trade.time}</Fit>
            <Fit className="ml-[43px] w-[83px] text-[#129512]">43.51</Fit>
            <Fit className="ml-[19px] w-[73px] text-[28px] text-[#ce3434]">{trade.volume}</Fit>
          </div>
        ))}
      </div>
    </aside>
  );
}

const queue = [
  [
    { text: "2.31万", width: "w-[94px]" },
    { text: "4351", width: "w-[73px]" },
    { text: "4351", width: "w-[73px]" },
    { text: "4351", width: "w-[73px]" },
  ],
  [
    { text: "1.31万", width: "w-[87px]" },
    { text: "2.18万", width: "w-[94px]" },
    { text: "4351", width: "w-[73px]" },
    { text: "4.79万", width: "w-[99px]" },
  ],
  [
    { text: "4351", width: "w-[73px]" },
    { text: "8702", width: "w-[73px]" },
    { text: "8.70万", width: "w-[97px]" },
    { text: "...", width: "w-[26px]" },
  ],
];

function BestQuotes() {
  return (
    <section className="flex h-[203px] shrink-0 overflow-hidden border-t-2 border-[#d8d8d8] text-[33px] text-[#222]">
      <div className="w-[541px] shrink-0 border-r-2 border-[#d8d8d8]">
        <div className="flex h-[55px] items-center border-b-2 border-[#d8d8d8] pt-[2px]">
          <Fit className="ml-[11px] w-[47px]">卖1</Fit>
          <Fit className="ml-[171px] w-[83px] text-[#129512]">43.51</Fit>
          <Fit className="ml-[124px] w-[96px]">1.42亿</Fit>
        </div>
        <div className="text-[#129512]">
          {queue.map((row, i) => (
            <div key={i} className="flex h-[54px] items-center pl-[3px]">
              {row.map((cell, j) => (
                <div key={j} className="flex w-[133px] justify-end">
                  <Fit className={cell.width}>{cell.text}</Fit>
                </div>
              ))}
            </div>
          ))}
        </div>
      </div>
      <div className="flex h-[55px] flex-1 items-center border-b-2 border-[#d8d8d8] pt-[2px]">
        <Fit className="ml-[10px] w-[47px]">买1</Fit>
        <Fit className="ml-[191px] w-[40px]">--</Fit>
        <Fit className="ml-auto mr-[5px] w-[20px]">0</Fit>
      </div>
    </section>
  );
}

function Action({ label, className, children }: { label: string; className?: string; children: ReactNode }) {
  return (
    <div className={clsx("flex w-[207px] shrink-0 flex-col items-center pt-[8px] text-[32px]", className)}>
      <svg viewBox="0 0 60 56" className="h-14 w-[60px]" fill="none" stroke="currentColor" strokeWidth="2.600" strokeLinecap="round" strokeLinejoin="round">
        {children}
      </svg>
      <span className="mt-[17px]">{label}</span>
    </div>
  );
}

function ActionBar() {
  return (
    <nav className="flex h-[126px] shrink-0 border-b-2 border-t-2 border-[#dcdee0] bg-[#f7f8fa] text-[#666]">
      <div className="w-[252px] shrink-0">
        <svg viewBox="0 0 20 7" className="ml-[117px] mt-[7px] h-[7px] w-5" fill="#777">
          <path d="M0 7H20L10 0Z" />
        </svg>
        <Fit className="ml-[63px] mt-[13px] w-[129px] text-[35px] text-[#129512]">3813.56</Fit>
        <div className="mt-[11px] flex h-[33px] items-center text-[32px]">
          <Fit className="ml-[38px] w-[65px]">上证</Fit>
          <Fit className="ml-[41px] w-[107px] text-[34px] text-[#129512]">−1.16%</Fit>
        </div>
      </div>
      <Action label="交易">
        <path d="M15.500 6.500A25.500 25.500 0 0 1 53.500 38.500L60 35.500M44.500 47.500A25.500 25.500 0 0 1 8.500 15L1 18" />
        <path d="M21 16L30 25L39 16M30 25V41M21 26.500H39M21 34.500H39" />
      </Action>
      <Action label="发帖">
        <path d="M40 3H12Q6 3 6 9V45Q6 51 12 51H48Q54 51 54 45V19" strokeWidth="3" />
        <path d="M22.500 35L26 26L44 8.500L48 12.500L30 31ZM46 6.500L50 3Q55 3 54 7.500L50 10.500Z" fill="currentColor" stroke="none" />
      </Action>
      <Action label="功能">
        <rect x="7" y="5" width="21" height="20" rx="3" />
        <rect x="7" y="30" width="21" height="20" rx="3" />
        <rect x="32" y="30" width="21" height="20" rx="3" />
        <rect x="34" y="6.500" width="16.500" height="16.500" rx="2.500" transform="rotate(45 42.250 14.750)" />
      </Action>
      <Action label="加自选" className="text-[#dc5a14]">
        <circle cx="30" cy="28" r="24.500" />
        <path d="M18 28H42M30 16V40" />
      </Action>
    </nav>
  );
}

function SystemNav() {
  return (
    <div className="flex h-[129px] shrink-0 items-center">
      <svg viewBox="0 0 32 32" className="ml-[301px] h-8 w-8" stroke="#8c8c8c" strokeWidth="3" strokeLinecap="round">
        <path d="M2.500 4H29.500M2.500 16H29.500M2.500 28H29.500" />
      </svg>
      <svg viewBox="0 0 32 32" className="ml-[191px] h-8 w-8" fill="none" stroke="#8c8c8c" strokeWidth="2.800">
        <rect x="1.500" y="1.500" width="29" height="29" rx="6.500" />
      </svg>
      <svg viewBox="0 0 18 34" className="ml-[202px] h-[34px] w-[18px]" fill="none" stroke="#8c8c8c" strokeWidth="2.600" strokeLinecap="round" strokeLinejoin="round">
        <path d="M16 2L2 17L16 32" />
      </svg>
      <svg viewBox="0 0 38 42" className="-mt-[6px] ml-[165px] h-[42px] w-[38px]" fill="#8c8c8c">
        <circle cx="19" cy="5" r="4" />
        <path d="M0 11H38V15.500H25V41H20.500V29H17.500V41H13V15.500H0Z" />
      </svg>
    </div>
  );
}

export default function App() {
  return (
    <div className="flex h-[2400px] w-[1080px] flex-col overflow-hidden bg-white font-['Inter','Noto_Sans_CJK_SC',sans-serif] leading-none [font-feature-settings:'case']">
      <StatusBar />
      <Header />
      <QuoteSummary />
      <Notice />
      <PeriodTabs />
      <PriceLine />
      <div className="flex h-[1248px] shrink-0">
        <ChartColumn />
        <OrderBook />
      </div>
      <BestQuotes />
      <ActionBar />
      <SystemNav />
    </div>
  );
}
